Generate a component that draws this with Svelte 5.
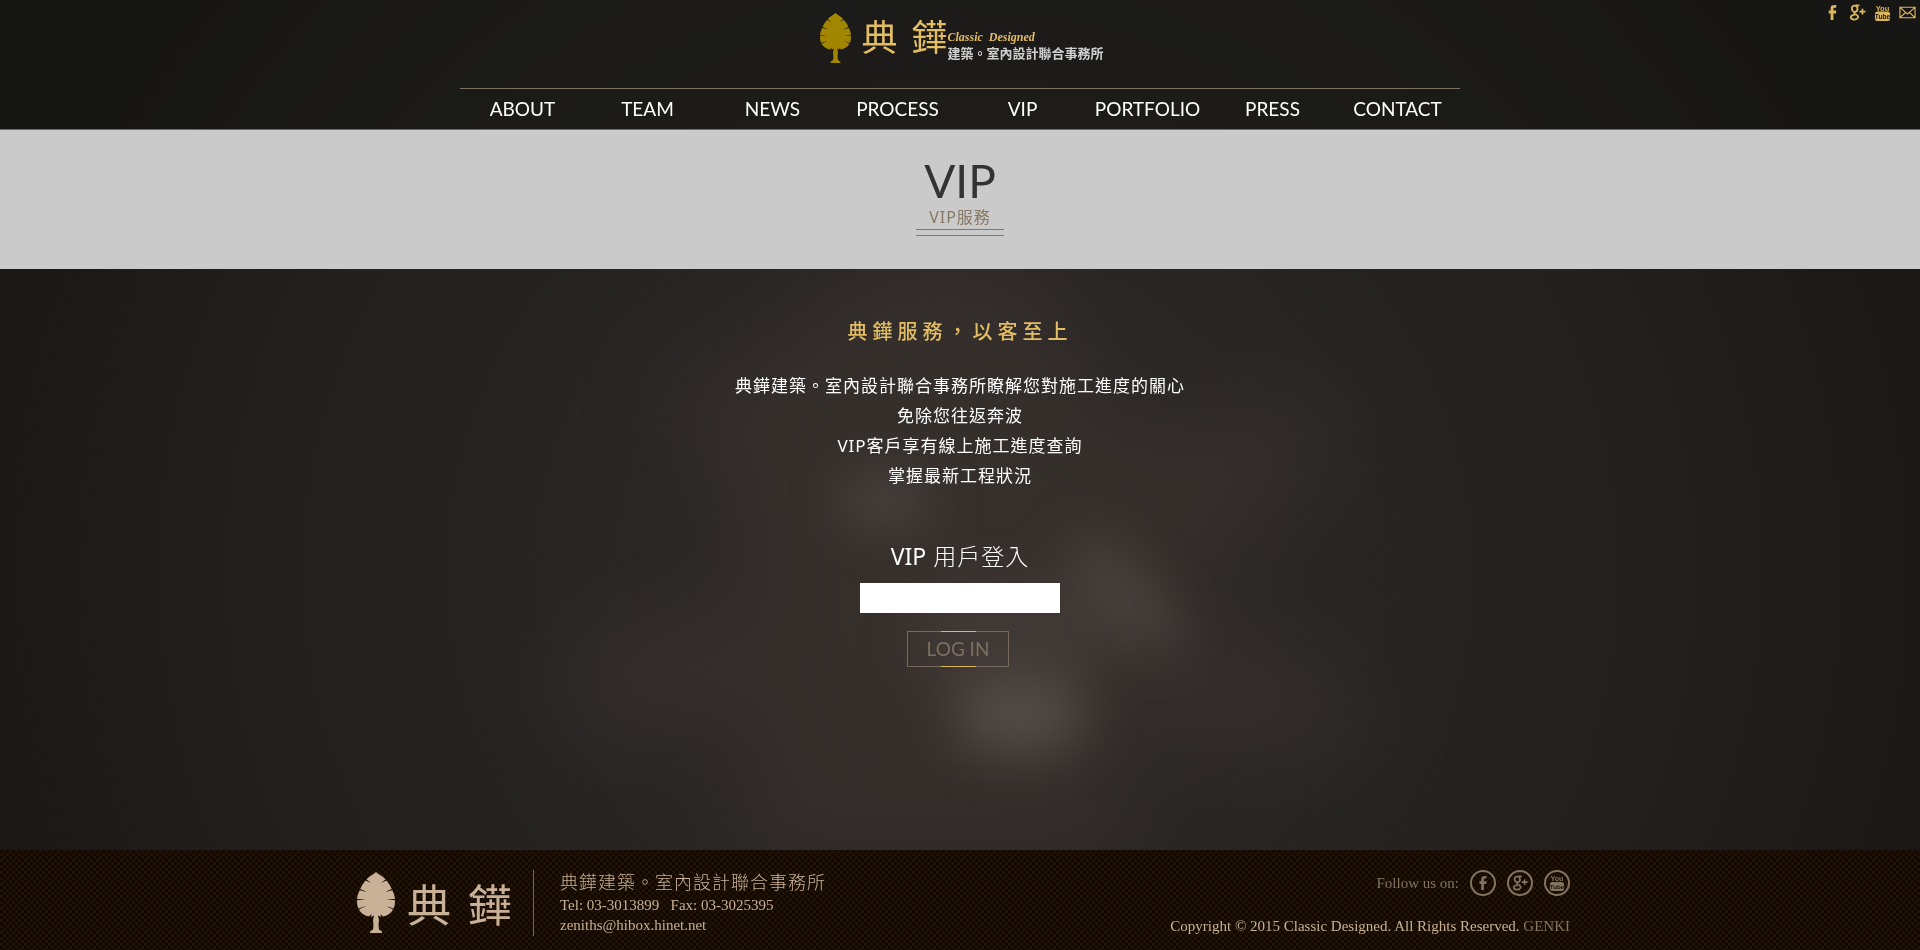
<script>
  const nav = ['ABOUT', 'TEAM', 'NEWS', 'PROCESS', 'VIP', 'PORTFOLIO', 'PRESS', 'CONTACT'];
  const networks = ['facebook', 'google', 'youtube'];
  const names = { facebook: 'Facebook', google: 'Google Plus', youtube: 'YouTube', mail: 'Mail' };
  let account = $state('');
</script>

{#snippet tree()}
  <svg class="tree" viewBox="0 0 38 61" fill="currentColor" aria-hidden="true">
    <path d="M19 0C16 3 12 4 9.500 7.500L14 11 8.600 8.500C6.500 11 4.500 14 3.200 17L10 20 2.700 18.200C1.200 21 .2 24 .1 27L9 27.500 0 28.200C-.1 31 .3 34 1.300 36.500L9 34 1.900 37.600C4 41.500 8 44 12 44.600L14.500 42 14 45 17 43.500 16 48C16.500 52 16.500 55 16 57.500L13 59.500V61H25V59.500L22 57.500C21.500 55 21.500 52 22 48L21 43.500 24 45 23.500 42 26 44.600C30 44 34 41.500 36.100 37.600L29 34 36.700 36.500C37.700 34 38.100 31 38 28.200L29 27.500 37.900 27C37.800 24 36.800 21 35.300 18.200L28 20 34.800 17C33.500 14 31.500 11 29.400 8.500L24 11 28.500 7.500C26 4 22 3 19 0Z" />
  </svg>
{/snippet}

{#snippet icon(kind)}
  <svg class="glyph" viewBox="0 0 18 18" aria-hidden="true">
    {#if kind === 'facebook'}
      <path fill="currentColor" d="M7 17V10H5V7H7V5C7 2 8 1 11 1H13V4H12C11 4 10 4 10 5V7H13L12.700 10H10V17Z" />
    {:else if kind === 'google'}
      <g fill="none" stroke="currentColor" stroke-width="1.900">
        <ellipse cx="6" cy="5" rx="3" ry="3.300" />
        <path d="M7 1.500H11M7 8C5 9 5 10 7 11 12 13 9 16.500 6 16.500 1 16.500 0 12 6 11.500M11 8H17.500M14.200 5V11" />
      </g>
    {:else if kind === 'youtube'}
      <rect x="1" y="8" width="16" height="10" rx="3" fill="currentColor" />
      <text x="9" y="7" text-anchor="middle" class="you">You</text>
      <text x="9" y="16" text-anchor="middle" class="tube">Tube</text>
    {:else}
      <g fill="none" stroke="currentColor" stroke-width="1.200">
        <path d="M1 3.500H17V14.500H1ZM1 3.500 9 10.500 17 3.500M1 14.500 7 9M17 14.500 11 9" />
      </g>
    {/if}
  </svg>
{/snippet}

<div class="page">
  <svg class="smoke" viewBox="0 0 1920 950" preserveAspectRatio="xMidYMid slice" aria-hidden="true">
    <defs>
      <filter id="haze" x="-60%" y="-60%" width="220%" height="220%" color-interpolation-filters="sRGB">
        <feGaussianBlur stdDeviation="45" />
      </filter>
      <filter id="wisp" x="-60%" y="-60%" width="220%" height="220%" color-interpolation-filters="sRGB">
        <feGaussianBlur stdDeviation="26" />
      </filter>
    </defs>
    <g filter="url(#haze)" fill="#403733" opacity="0.5">
      <path d="M850 270 960 240 1060 290 1110 420 1290 400 1350 430 1270 520 1180 600 1340 680 1370 740 1250 760 1120 720 1130 860H730L760 720 590 740 560 660 660 600 760 620 720 480 660 400 760 350Z" />
    </g>
    <g filter="url(#wisp)" fill="#68605c">
      <ellipse cx="1020" cy="718" rx="68" ry="36" opacity="0.6" />
      <ellipse cx="1125" cy="595" rx="28" ry="75" opacity="0.4" transform="rotate(-42 1125 595)" />
      <ellipse cx="885" cy="500" rx="46" ry="28" opacity="0.4" />
      <ellipse cx="1010" cy="640" rx="100" ry="60" opacity="0.2" />
    </g>
  </svg>

  <header>
    <div class="quick">
      {#each [...networks, 'mail'] as kind}
        <a href="#{kind}" aria-label={names[kind]}>{@render icon(kind)}</a>
      {/each}
    </div>
    <a class="brand" href="#home">
      {@render tree()}
      <span class="mark"><span>典</span><span>鏵</span></span>
      <span class="names">
        <span class="script">Classic&nbsp; Designed</span>
        <span class="office">建築。室內設計聯合事務所</span>
      </span>
    </a>
    <nav>
      {#each nav as item}
        <a href="#{item.toLowerCase()}">{item}</a>
      {/each}
    </nav>
  </header>

  <section class="banner">
    <h1>VIP</h1>
    <p>VIP服務</p>
  </section>

  <main>
    <h2>典鏵服務，以客至上</h2>
    <p>
      典鏵建築。室內設計聯合事務所瞭解您對施工進度的關心<br />
      免除您往返奔波<br />
      VIP客戶享有線上施工進度查詢<br />
      掌握最新工程狀況
    </p>
    <form onsubmit={(e) => e.preventDefault()}>
      <label for="account"><b>VIP</b> 用戶登入</label>
      <input id="account" type="text" bind:value={account} />
      <button type="submit">LOG IN</button>
    </form>
  </main>

  <footer>
    <div class="inner">
      <div class="foot-brand">
        {@render tree()}
        <span class="mark"><span>典</span><span>鏵</span></span>
      </div>
      <address>
        <strong>典鏵建築。室內設計聯合事務所</strong>
        <span>Tel: 03-3013899 &nbsp; Fax: 03-3025395</span>
        <a href="mailto:zeniths@hibox.hinet.net">zeniths@hibox.hinet.net</a>
      </address>
      <div class="legal">
        <div class="follow">
          <span>Follow us on:</span>
          {#each networks as kind}
            <a class="ring" href="#{kind}" aria-label={names[kind]}>{@render icon(kind)}</a>
          {/each}
        </div>
        <p>Copyright © 2015 Classic Designed. All Rights Reserved. <a href="#genki">GENKI</a></p>
      </div>
    </div>
  </footer>
</div>

<style>
  :global(body) {
    margin: 0;
    background: #1b1a19;
  }
  .page {
    position: relative;
    isolation: isolate;
    min-height: 100vh;
    display: flex;
    flex-direction: column;
    color: #fff;
    font-family: 'Noto Sans', 'Noto Sans CJK TC', sans-serif;
    background: radial-gradient(ellipse 52% 100% at 50% 60%, #2d2927 0%, #282524 40%, #222120 68%, #191817 100%);
  }
  .smoke {
    position: absolute;
    inset: 0;
    z-index: -1;
    width: 100%;
    height: 100%;
  }
  a {
    color: inherit;
    text-decoration: none;
  }
  header {
    position: relative;
    height: 129px;
    display: flex;
    flex-direction: column;
    align-items: center;
    justify-content: space-between;
    background: rgba(20, 19, 18, 0.5);
    border-bottom: 1px solid #6e6c6a;
  }
  .quick {
    position: absolute;
    top: 4px;
    right: 4px;
    display: flex;
    gap: 8px;
    color: #dcb75c;
  }
  .glyph {
    display: block;
    width: 17px;
    height: 17px;
  }
  .you,
  .tube {
    font: bold 8px 'Liberation Sans', sans-serif;
    fill: currentColor;
  }
  .tube {
    font-size: 7px;
    fill: #15110d;
  }
  .brand {
    display: flex;
    margin-top: 13px;
    padding-left: 4px;
  }
  .brand .tree {
    width: 31px;
    height: 50px;
    color: #a38600;
  }
  .mark {
    display: flex;
    align-items: center;
    font-weight: 400;
  }
  .brand .mark {
    margin-left: 10px;
    gap: 14px;
    height: 50px;
    font-size: 36px;
    line-height: 50px;
    color: #e3bd63;
  }
  .names {
    display: flex;
    flex-direction: column;
    padding-top: 16px;
  }
  .script {
    font: italic bold 12px/16px 'Liberation Serif', serif;
    color: #e3bd63;
  }
  .office {
    font-size: 13px;
    line-height: 16px;
    font-weight: 700;
    color: #d0d0d0;
  }
  nav {
    width: 1000px;
    max-width: 100%;
    display: grid;
    grid-template-columns: repeat(8, 1fr);
    border-top: 1px solid #7d705f;
    text-align: center;
    font: 19px/40px Lato, sans-serif;
  }
  .banner {
    display: flex;
    flex-direction: column;
    align-items: center;
    height: 139px;
    background: #cacaca;
  }
  h1 {
    margin: 23px 0 0;
    font: 46px/56px Lato, sans-serif;
    color: #333;
  }
  .banner p {
    position: relative;
    margin: 0;
    padding: 0 13px;
    height: 20px;
    font-size: 16px;
    line-height: 16px;
    letter-spacing: 1px;
    color: #857864;
    border-bottom: 1px solid #857864;
  }
  .banner p::after {
    content: '';
    position: absolute;
    left: 0;
    right: 0;
    top: 26px;
    border-top: 1px solid #857864;
  }
  main {
    flex: 1;
    display: flex;
    flex-direction: column;
    align-items: center;
    text-align: center;
  }
  h2 {
    margin: 48px 0 0;
    font-size: 20px;
    line-height: 30px;
    font-weight: 500;
    letter-spacing: 5px;
    color: #e3bd63;
  }
  main p {
    margin: 24px 0 0;
    font-size: 17px;
    line-height: 30px;
    letter-spacing: 1px;
    font-weight: 400;
  }
  form {
    display: flex;
    flex-direction: column;
    align-items: center;
    margin-top: 48px;
  }
  label {
    font-size: 23px;
    line-height: 34px;
    font-weight: 300;
    letter-spacing: 1px;
  }
  label b {
    font-weight: 400;
    letter-spacing: 0;
  }
  input {
    width: 200px;
    height: 30px;
    margin: 10px 0 18px;
    padding: 0 8px;
    border: 0;
    box-sizing: border-box;
    background: #fff;
    font-size: 16px;
  }
  button {
    position: relative;
    width: 102px;
    height: 36px;
    margin-right: 4px;
    padding: 0;
    border: 1px solid #76695a;
    background: none;
    color: #7d705f;
    font: 19px/34px Lato, sans-serif;
  }
  button::before,
  button::after {
    content: '';
    position: absolute;
    left: 33px;
    width: 35px;
    height: 1px;
    background: #dcb75c;
  }
  button::before {
    top: -1px;
  }
  button::after {
    bottom: -1px;
  }
  footer {
    height: 100px;
    background:
      repeating-conic-gradient(rgba(42, 23, 8, 0.6) 0 25%, transparent 0 50%) 0 0 / 6px 6px,
      #110900;
    color: #c9b197;
    font: 15px/20px 'Liberation Serif', serif;
  }
  .inner {
    display: flex;
    max-width: 1220px;
    margin: 0 auto;
    padding-top: 20px;
  }
  .foot-brand {
    display: flex;
    height: 66px;
    padding: 0 21px 0 7px;
    border-right: 1px solid #76695a;
  }
  .foot-brand .tree {
    width: 38px;
    height: 61px;
    padding-top: 2px;
  }
  .foot-brand .mark {
    margin-left: 12px;
    gap: 17px;
    font: 44px/62px 'Noto Sans CJK TC', sans-serif;
  }
  address {
    display: flex;
    flex-direction: column;
    padding-left: 26px;
    font-style: normal;
  }
  address strong {
    font: 300 18px/25px 'Noto Sans', 'Noto Sans CJK TC', sans-serif;
    letter-spacing: 1px;
  }
  .legal {
    margin-left: auto;
    display: flex;
    flex-direction: column;
    align-items: flex-end;
    justify-content: space-between;
  }
  .legal p {
    margin: 0;
  }
  .legal p a,
  .follow {
    color: #83735f;
  }
  .follow {
    display: flex;
    align-items: center;
    gap: 11px;
  }
  .ring {
    display: grid;
    place-items: center;
    width: 22px;
    height: 22px;
    border: 2px solid currentColor;
    border-radius: 50%;
  }
  .ring .glyph {
    width: 16px;
    height: 16px;
  }
</style>
